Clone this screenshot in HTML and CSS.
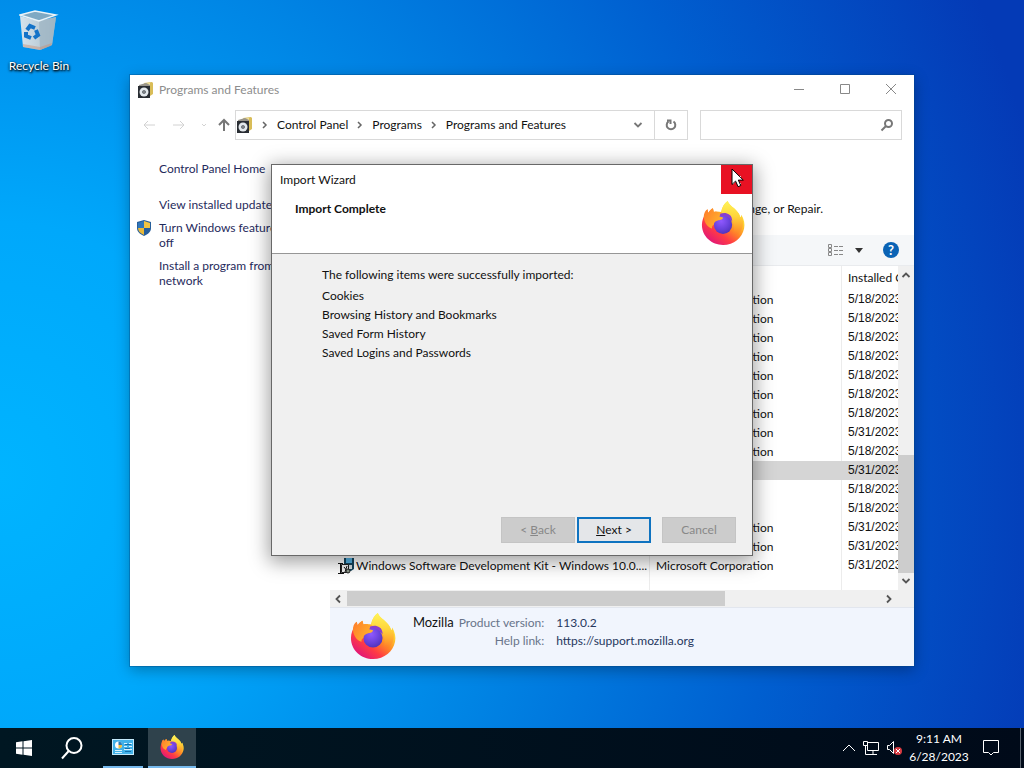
FILE: index.html
```html
<!DOCTYPE html>
<html lang="en">
<head>
<meta charset="utf-8">
<title>Desktop</title>
<link rel="stylesheet" href="styles.css">
</head>
<body>
<svg class="sprite" aria-hidden="true">
  <defs>
    <linearGradient id="fx-body" x1=".85" y1=".1" x2=".2" y2=".95">
      <stop offset="0" stop-color="#fff44f"/><stop offset=".25" stop-color="#ffd02e"/><stop offset=".48" stop-color="#ff8a25"/><stop offset=".72" stop-color="#ff3b45"/><stop offset="1" stop-color="#e0157a"/>
    </linearGradient>
    <linearGradient id="fx-flame" x1=".6" y1="0" x2=".6" y2="1">
      <stop offset="0" stop-color="#fff45a"/><stop offset=".45" stop-color="#ffd43a"/><stop offset=".8" stop-color="#ff9a2c" stop-opacity=".8"/><stop offset="1" stop-color="#ff6a33" stop-opacity="0"/>
    </linearGradient>
    <radialGradient id="fx-globe" cx=".4" cy=".3" r=".8">
      <stop offset="0" stop-color="#9059ff"/><stop offset=".6" stop-color="#6540d8"/><stop offset="1" stop-color="#4a2fb0"/>
    </radialGradient>
    <linearGradient id="fx-head" x1="0" y1="0" x2="1" y2=".6">
      <stop offset="0" stop-color="#ff7a2a"/><stop offset="1" stop-color="#ffb52e"/>
    </linearGradient>
    <linearGradient id="bin-side" x1="0" x2="1"><stop offset="0" stop-color="#d6e3ec"/><stop offset="1" stop-color="#a9bdca"/></linearGradient>
    <symbol id="firefox" viewBox="0 0 48 48">
      <path fill="url(#fx-body)" d="M29 0c2 5 7 7 10 11 2 2 3 4 4 7 1-1 1-2 1-3 3 5 4 10 3 15-2 10-11 18-23 18S1 39 1 26c0-5 2-9 4-13 0-2 1-3 2-4l1 4c1-2 3-4 5-5l1 4c3-1 6 0 8 0 1-5 3-9 7-12z"/>
      <path fill="url(#fx-flame)" d="M29 0c2 5 7 7 10 11 2 2 3 4 4 7 1-1 1-2 1-3 4 9 1 18-5 23h-5c3-5 3-12 0-17-3-4-8-5-12-9 1-5 3-9 7-12z"/>
      <path fill="#8a3fd0" d="M18 16c3-3 9-4 13-1 2 1 3 4 3 7-3-3-8-4-12-3z"/>
      <circle cx="24" cy="26" r="10" fill="url(#fx-globe)"/>
      <path fill="url(#fx-head)" d="M3 18c0-4 1-7 4-9l1 4c1-2 3-4 5-5l1 4c3-1 6 0 7 3l-1 2 4 1c0 2-3 3-5 3-3 1-5 2-5 5-2 1-2 2-2 4-4-1-8-5-9-12z"/>
    </symbol>
    <symbol id="package" viewBox="0 0 16 16">
      <path fill="#d9bd58" d="M6 1l8-1 1 1v11l-3 2z"/><path fill="#f0e2a4" d="M5 2l7-1v3H5z"/><path fill="#98948a" d="M1 3l7-2 4 2v3H1z"/>
      <path fill="#292d33" d="M0 4h12v12H0z"/><circle cx="6" cy="10" r="4.5" fill="#e3e8ec"/><circle cx="6" cy="10" r="1.8" fill="#343b42"/><circle cx="6" cy="10" r=".7" fill="#fff"/>
    </symbol>
    <symbol id="chevron-right" viewBox="0 0 8 8"><path d="M2 1l3 3-3 3" fill="none" stroke="currentColor" stroke-width="1.5"/></symbol>
    <symbol id="chevron-down" viewBox="0 0 12 12"><path d="M2.500 4l3.500 3.500L9.500 4" fill="none" stroke="currentColor" stroke-width="1.8"/></symbol>
  </defs>
</svg>

<main class="desktop">
  <a class="shortcut" href="#recycle">
    <svg class="bin" viewBox="0 0 40 44" aria-hidden="true">
      <path fill="url(#bin-side)" d="M1 6l19 5 17-4-4 28-12 5-17-3z"/>
      <path fill="#9db4c3" opacity=".75" d="M20 11l17-4-4 28-12 5z"/>
      <path fill="#7fa9c3" stroke="#eaf3f8" stroke-width="1.4" d="M1 5l15-4 21 4-17 6z"/>
      <path fill="#c98f70" opacity=".45" d="M4 34l17 3 12-4-1 3-11 4-17-3z"/>
      <g fill="none" stroke="#1473c8" stroke-width="4"><path d="M8 20l3-4 5 2"/><path d="M17 20l2 5-4 3"/><path d="M12 28l-5-2 0-4"/></g>
    </svg>
    <span>Recycle Bin</span>
  </a>

  <section class="window" aria-label="Programs and Features">
    <header class="titlebar">
      <svg class="icon16" aria-hidden="true"><use href="#package"/></svg>
      <h1>Programs and Features</h1>
      <div class="caption">
        <button aria-label="Minimize"><svg viewBox="0 0 12 12"><path d="M1 5.500h10"/></svg></button>
        <button aria-label="Maximize"><svg viewBox="0 0 12 12"><path d="M1.500 .5h9v9h-9z"/></svg></button>
        <button aria-label="Close"><svg viewBox="0 0 12 12"><path d="M1 0l10 10M11 0L1 10"/></svg></button>
      </div>
    </header>

    <nav class="navbar">
      <div class="history">
        <button class="faint" aria-label="Back" disabled><svg viewBox="0 0 14 14"><path d="M13 7H2M6 3L2 7l4 4"/></svg></button>
        <button class="faint" aria-label="Forward" disabled><svg viewBox="0 0 14 14"><path d="M1 7h11M8 3l4 4-4 4"/></svg></button>
        <button class="faint recent" aria-label="Recent" disabled><svg viewBox="0 0 14 14"><path d="M5 6l2 2 2-2"/></svg></button>
        <button class="up" aria-label="Up"><svg viewBox="0 0 14 14"><path d="M7 13V2M2 7l5-5 5 5"/></svg></button>
      </div>
      <div class="address">
        <div class="crumbs">
          <svg class="icon16" aria-hidden="true"><use href="#package"/></svg>
          <svg class="sep" aria-hidden="true"><use href="#chevron-right"/></svg>
          <a href="#cp">Control Panel</a>
          <svg class="sep" aria-hidden="true"><use href="#chevron-right"/></svg>
          <a href="#programs">Programs</a>
          <svg class="sep" aria-hidden="true"><use href="#chevron-right"/></svg>
          <a href="#features">Programs and Features</a>
        </div>
        <button class="drop" aria-label="Previous locations"><svg class="icon12" aria-hidden="true"><use href="#chevron-down"/></svg></button>
        <button class="refresh" aria-label="Refresh"><svg viewBox="0 0 14 14"><path d="M9.500 3.500a4.300 4.300 0 1 1-5 0M3 2.500h3.500V6"/></svg></button>
      </div>
      <label class="search"><input type="text" aria-label="Search Programs and Features">
        <svg viewBox="0 0 14 14" aria-hidden="true"><circle cx="8.500" cy="5.500" r="3.500"/><path d="M6 8l-4.500 4.500"/></svg>
      </label>
    </nav>

    <div class="content">
      <aside class="sidebar">
        <a class="home" href="#home">Control Panel Home</a>
        <a href="#updates">View installed updates</a>
        <a class="shielded" href="#turn">
          <svg class="shield" viewBox="0 0 16 16" aria-hidden="true">
            <path fill="#275f9b" d="M8 0l7 2v6c0 4-3 6-7 8-4-2-7-4-7-8V2z"/>
            <path fill="#2f76bb" d="M8 1v7H2V3z"/><path fill="#f0c443" d="M8 1l6 2v5H8z"/><path fill="#e9b93a" d="M2 8h6v7c-4-2-6-4-6-7z"/><path fill="#235d9e" d="M8 8h6c0 3-2 5-6 7z"/>
          </svg>Turn Windows features on or<br>off</a>
        <a href="#install">Install a program from the<br>network</a>
      </aside>

      <div class="pane">
        <p class="hint">click Uninstall, Change, or Repair.</p>
        <div class="toolbar">
          <button class="views" aria-label="Change your view">
            <svg viewBox="0 0 18 14"><path fill="none" stroke="#888" d="M1.500 1.500h3v3h-3zM1.500 5.500h3v3h-3zM1.500 9.500h3v3h-3z"/><path stroke="#888" stroke-dasharray="4 1" d="M7 3.500h10M7 7.500h10M7 11.500h10"/></svg>
            <svg class="caret" viewBox="0 0 8 5"><path fill="#333" d="M0 0h8L4 5z"/></svg>
          </button>
          <button class="help" aria-label="Help">?</button>
        </div>

        <div class="list">
          <div class="viewport">
            <table>
              <colgroup><col class="c-name"><col class="c-pub"><col class="c-date"></colgroup>
              <thead><tr><th></th><th></th><th>Installed On</th></tr></thead>
              <tbody>
                <tr><td></td><td>Microsoft Corporation</td><td>5/18/2023</td></tr>
                <tr><td></td><td>Microsoft Corporation</td><td>5/18/2023</td></tr>
                <tr><td></td><td>Microsoft Corporation</td><td>5/18/2023</td></tr>
                <tr><td></td><td>Microsoft Corporation</td><td>5/18/2023</td></tr>
                <tr><td></td><td>Microsoft Corporation</td><td>5/18/2023</td></tr>
                <tr><td></td><td>Microsoft Corporation</td><td>5/18/2023</td></tr>
                <tr><td></td><td>Microsoft Corporation</td><td>5/18/2023</td></tr>
                <tr><td></td><td>Microsoft Corporation</td><td>5/31/2023</td></tr>
                <tr><td></td><td>Microsoft Corporation</td><td>5/18/2023</td></tr>
                <tr class="selected"><td></td><td></td><td>5/31/2023</td></tr>
                <tr><td></td><td></td><td>5/18/2023</td></tr>
                <tr><td></td><td></td><td>5/18/2023</td></tr>
                <tr><td></td><td>Microsoft Corporation</td><td>5/31/2023</td></tr>
                <tr><td></td><td>Microsoft Corporation</td><td>5/31/2023</td></tr>
                <tr><td class="app"><div><svg class="icon16" viewBox="0 0 16 16" aria-hidden="true"><path fill="#15465f" d="M6 0h10v11l-3 2H6z"/><path fill="#55b4e6" d="M8 0h6v5H8z"/><path fill="#d7dfe2" d="M8 7h6v4H8z"/><path fill="#f2f2f2" stroke="#222" d="M3.500 6.500h7v8h-7z"/><path fill="none" stroke="#111" d="M0 5.500h5M2.500 5v10M0 15.500h6M6 9l4 5M9 8l-2 6"/><circle cx="10" cy="13" r="2" fill="#8d9a8c" stroke="#222"/></svg><span>Windows Software Development Kit - Windows 10.0....</span></div></td><td>Microsoft Corporation</td><td>5/31/2023</td></tr>
                <tr class="rest"><td></td><td></td><td></td></tr>
              </tbody>
            </table>
          </div>
          <div class="vscroll">
            <svg class="icon12 flip" aria-hidden="true"><use href="#chevron-down"/></svg>
            <i class="thumb"></i>
            <svg class="icon12" aria-hidden="true"><use href="#chevron-down"/></svg>
          </div>
        </div>
        <div class="hscroll">
          <svg class="icon12 left" aria-hidden="true"><use href="#chevron-down"/></svg>
          <i class="thumb"></i>
          <svg class="icon12 right" aria-hidden="true"><use href="#chevron-down"/></svg>
        </div>

        <footer class="details">
          <svg class="logo" aria-hidden="true"><use href="#firefox"/></svg>
          <strong>Mozilla</strong>
          <dl><dt>Product version:</dt><dd>113.0.2</dd><dt>Help link:</dt><dd>https://support.mozilla.org</dd></dl>
        </footer>
      </div>
    </div>
  </section>

  <section class="dialog" role="dialog" aria-labelledby="wizard-title">
    <header class="dialog-head">
      <div class="dialog-title">
        <h2 id="wizard-title">Import Wizard</h2>
        <button class="dialog-close" aria-label="Close"><svg viewBox="0 0 12 12"><path d="M2 2l8 8M10 2l-8 8"/></svg></button>
      </div>
      <div class="banner">
        <h3>Import Complete</h3>
        <svg class="logo" aria-hidden="true"><use href="#firefox"/></svg>
      </div>
    </header>
    <div class="dialog-body">
      <p>The following items were successfully imported:</p>
      <ul><li>Cookies</li><li>Browsing History and Bookmarks</li><li>Saved Form History</li><li>Saved Logins and Passwords</li></ul>
    </div>
    <footer class="dialog-actions">
      <button disabled>&lt; <u>B</u>ack</button>
      <button class="primary"><u>N</u>ext &gt;</button>
      <button class="cancel" disabled>Cancel</button>
    </footer>
  </section>

  <svg class="pointer" viewBox="0 0 13 20" aria-hidden="true"><path fill="#fff" stroke="#000" d="M1 1v15.500l3.600-3.400 2.500 5.600 2.700-1.200-2.500-5.400h5z"/></svg>
</main>

<footer class="taskbar">
  <button aria-label="Start"><svg width="16" height="16" viewBox="0 0 16 16"><path fill="#fff" d="M0 2.200L6.500 1.300v6.200H0zM7.500 1.200L16 0v7.500H7.500zM0 8.500h6.500v6.200L0 13.800zM7.500 8.500H16V16l-8.500-1.200z"/></svg></button>
  <button aria-label="Search"><svg width="24" height="24" viewBox="0 0 24 24"><g fill="none" stroke="#fff" stroke-width="2"><circle cx="14" cy="9.500" r="7.500"/><path d="M8.700 15L2 22.500"/></g></svg></button>
  <button class="open control-panel" aria-label="Control Panel"><svg width="22" height="16" viewBox="0 0 22 16"><path fill="#c5eafc" d="M0 0h22v16H0z"/><path fill="#42b2e9" d="M1 1h20v14H1z"/><circle cx="6.500" cy="6" r="3.500" fill="#fff"/><path fill="#247bbd" d="M6.500 6V2.500A3.500 3.500 0 0 1 10 6z"/><path fill="#f2bd3c" d="M6.500 6H10a3.500 3.500 0 0 1-3.500 3.500z"/><path stroke="#d9f3ff" d="M12 4.500h3M17 4.500h3M12 7.500h3M17 7.500h3M12 10.500h8M3 11.500h7M3 13.500h7"/><path stroke="#1470ae" d="M13 5.500h6M13 9.500h5M13 12.500h6"/></svg></button>
  <button class="open active" aria-label="Firefox"><svg width="24" height="24"><use href="#firefox"/></svg></button>
  <div class="tray">
    <svg width="14" height="8" viewBox="0 0 14 8"><path d="M1 7l6-6 6 6"/></svg>
    <svg width="18" height="16" viewBox="0 0 18 16"><path d="M5.500 2.500h11v8h-11zM11 11v3M7 14.500h8M1.500 1.500h4v4h-4zM3.500 6v8.500h4"/></svg>
    <svg width="18" height="16" viewBox="0 0 18 16"><path d="M1.500 5.500h2l4-4v12l-4-4h-2z"/><circle cx="12" cy="11" r="4" fill="#d83b42" stroke="none"/><path d="M10 9l4 4M14 9l-4 4"/></svg>
  </div>
  <time datetime="2023-06-28T09:11"><span>9:11 AM</span><span>6/28/2023</span></time>
  <button class="notices" aria-label="Notifications"><svg width="18" height="18" viewBox="0 0 18 18"><path fill="none" stroke="#fff" d="M1.500 1.500h15v12h-5L9 16l-2.500-2.500h-5z"/></svg></button>
  <span class="peek"></span>
</footer>
</body>
</html>
```
FILE: styles.css
```css
* { box-sizing: border-box; }
body {
  margin: 0;
  min-height: 100vh;
  display: flex;
  flex-direction: column;
  font: 12px/15px Lato, "Open Sans", sans-serif;
  color: #111;
  background: radial-gradient(ellipse 105% 150% at 0 62%, #00b4ff 0, #00a8fb 22%, #0084e4 48%, #005fd0 73%, #043ab6 100%);
}
button { border: 0; padding: 0; background: none; font: inherit; color: inherit; display: flex; align-items: center; justify-content: center; }
a { color: inherit; text-decoration: none; }
h1, h2, h3, p, ul, dl, dd { margin: 0; padding: 0; font-size: inherit; font-weight: normal; list-style: none; }
svg { flex: none; display: block; }
.sprite { position: absolute; width: 0; height: 0; }
.icon16 { width: 16px; height: 16px; }
.icon12 { width: 12px; height: 12px; }
.desktop { flex: 1; position: relative; }

.shortcut { position: absolute; left: 2px; top: 10px; width: 74px; display: flex; flex-direction: column; align-items: center; gap: 4px; color: #fff; text-shadow: 1px 1px 2px #000, 0 1px 3px #000; }
.bin { width: 40px; height: 44px; }

.window { position: absolute; left: 130px; top: 75px; width: 784px; background: #fff; box-shadow: 0 0 0 1px rgba(0, 70, 130, .35), 0 4px 14px rgba(0, 0, 0, .3); }
.titlebar { display: flex; align-items: center; height: 29px; padding-left: 8px; gap: 5px; color: #8d8d8d; }
.caption { margin-left: auto; display: flex; }
.caption button { width: 46px; height: 29px; }
.caption svg, .dialog-close svg { width: 12px; height: 12px; stroke: #888; fill: none; }
.dialog-close svg { stroke: #fff; }

.navbar { display: flex; padding: 6px 12px 0 7px; }
.history { display: flex; width: 98px; gap: 6px; align-items: center; }
.history button { width: 24px; }
.history .recent { width: 14px; }
.history .up { width: 14px; }
.history svg { width: 14px; height: 14px; fill: none; stroke: #777; stroke-width: 2; }
.history .faint svg { stroke: #d2d2d2; stroke-width: 1; }
.address { flex: 1; display: flex; height: 30px; border: 1px solid #d9d9d9; }
.crumbs { flex: 1; display: flex; align-items: center; padding-left: 1px; gap: 8px; white-space: nowrap; }
.crumbs a { padding-bottom: 1px; }
.sep { width: 8px; height: 8px; color: #666; }
.drop { width: 32px; color: #777; }
.refresh { width: 33px; border-left: 1px solid #d9d9d9; }
.refresh svg, .search svg { width: 14px; height: 14px; fill: none; stroke: #777; stroke-width: 2; }
.search { width: 202px; margin-left: 12px; display: flex; align-items: center; border: 1px solid #d9d9d9; padding-right: 7px; }
.search input { flex: 1; min-width: 0; border: 0; outline: 0; font: inherit; background: none; }

.content { display: flex; }
.sidebar { width: 200px; padding: 21px 0 0 29px; display: flex; flex-direction: column; gap: 8px; color: #1f2a5c; white-space: nowrap; }
.sidebar .home { margin-bottom: 13px; }
.shielded { position: relative; }
.shield { position: absolute; left: -23px; top: 0; width: 16px; height: 16px; }
.pane { flex: 1; min-width: 0; display: flex; flex-direction: column; }
.hint { padding: 61px 91px 19px 0; text-align: right; white-space: nowrap; }
.toolbar { display: flex; justify-content: flex-end; align-items: center; gap: 20px; height: 31px; padding-right: 15px; background: #f5f7f9; border-bottom: 1px solid #e9ebee; }
.views { gap: 10px; }
.views svg { width: 18px; height: 14px; }
.views .caret { width: 8px; height: 5px; }
.help { width: 16px; height: 16px; border-radius: 50%; background: #0a63b5; color: #fff; font-size: 13px; font-weight: bold; }
.list { display: flex; }
.viewport { flex: 1; min-width: 0; overflow: hidden; }
table { table-layout: fixed; width: 620px; border-collapse: separate; border-spacing: 0; }
.c-name { width: 320px; }
.c-pub { width: 192px; }
.c-date { width: 108px; }
th, td { height: 19px; padding: 0 6px; text-align: left; font-weight: normal; white-space: nowrap; border-right: 1px solid #ececec; }
th { height: 24px; padding-bottom: 1px; }
td:last-child { font-family: "Liberation Sans", Arial, sans-serif; }
.selected td { background: #d5d5d5; border-color: #d5d5d5; }
.rest td { height: 15px; }
.app { padding: 0 0 0 8px; }
.app div { display: flex; align-items: center; gap: 2px; }
.vscroll { width: 16px; display: flex; flex-direction: column; align-items: center; justify-content: space-between; padding: 3px 0; background: #f0f0f0; color: #555; }
.vscroll .thumb { width: 16px; height: 118px; margin-top: auto; margin-bottom: 2px; background: #cdcdcd; }
.flip { transform: rotate(180deg); }
.left { transform: rotate(90deg); }
.right { transform: rotate(-90deg); }
.hscroll { display: flex; align-items: center; height: 17px; padding: 0 19px 0 2px; background: #f0f0f0; color: #555; }
.hscroll .thumb { width: 378px; height: 15px; margin-left: 3px; margin-right: auto; background: #cdcdcd; }
.details { display: flex; min-height: 59px; padding: 5px 20px; background: #f1f5fd; border-top: 1px solid #e2e6ee; }
.logo { width: 46px; height: 46px; }
.details strong { margin: 2px 5px 0 17px; font-size: 13px; font-weight: normal; }
.dialog .logo { width: 44px; height: 44px; }
dl { display: grid; grid-template-columns: auto auto; gap: 3px 12px; align-content: start; padding-top: 2px; }
dt { color: #68748a; text-align: right; }
dd { color: #26375d; }

.dialog { position: absolute; left: 271px; top: 164px; width: 482px; background: #f0f0f0; border: 1px solid #686868; box-shadow: 0 4px 18px 2px rgba(0, 0, 0, .38); }
.dialog-head { background: #fff; border-bottom: 1px solid #969696; }
.dialog-title { display: flex; justify-content: space-between; align-items: center; height: 29px; padding-left: 8px; }
.dialog-close { width: 31px; height: 29px; background: #e81123; }
.banner { display: flex; justify-content: space-between; padding: 7px 7px 8px 23px; }
.banner h3 { font-weight: bold; }
.dialog-body { padding: 13px 50px 0; min-height: 263px; }
.dialog-body ul { padding-top: 4px; }
.dialog-body li { line-height: 19px; }
.dialog-actions { display: flex; justify-content: flex-end; gap: 2px; padding: 0 16px 12px; }
.dialog-actions button { width: 74px; height: 26px; padding-bottom: 2px; background: #cccccc; border: 1px solid #c4c4c4; color: #888; white-space: pre; }
.dialog-actions .primary { background: #e4e6e9; border: 2px solid #0f73c0; color: #111; }
.dialog-actions .cancel { margin-left: 9px; }
.pointer { position: absolute; left: 731px; top: 168px; width: 13px; height: 20px; }

.taskbar { display: flex; align-items: center; height: 40px; color: #fff; background: linear-gradient(90deg, #001722, #000a19); }
.taskbar button { width: 48px; height: 40px; }
.taskbar .open { width: 40px; margin: 0 5px 0 7px; border-bottom: 2px solid #76b9ed; }
.taskbar .active { width: 48px; margin: 0; background: #2f424c; }
.tray { margin-left: auto; display: flex; align-items: center; gap: 6px; }
.tray svg { fill: none; stroke: #fff; }
time { display: flex; flex-direction: column; align-items: center; gap: 3px; width: 70px; padding-bottom: 2px; white-space: nowrap; }
.taskbar .notices { width: 34px; }
.peek { width: 4px; height: 40px; margin-left: 12px; border-left: 1px solid #59636e; }
```
